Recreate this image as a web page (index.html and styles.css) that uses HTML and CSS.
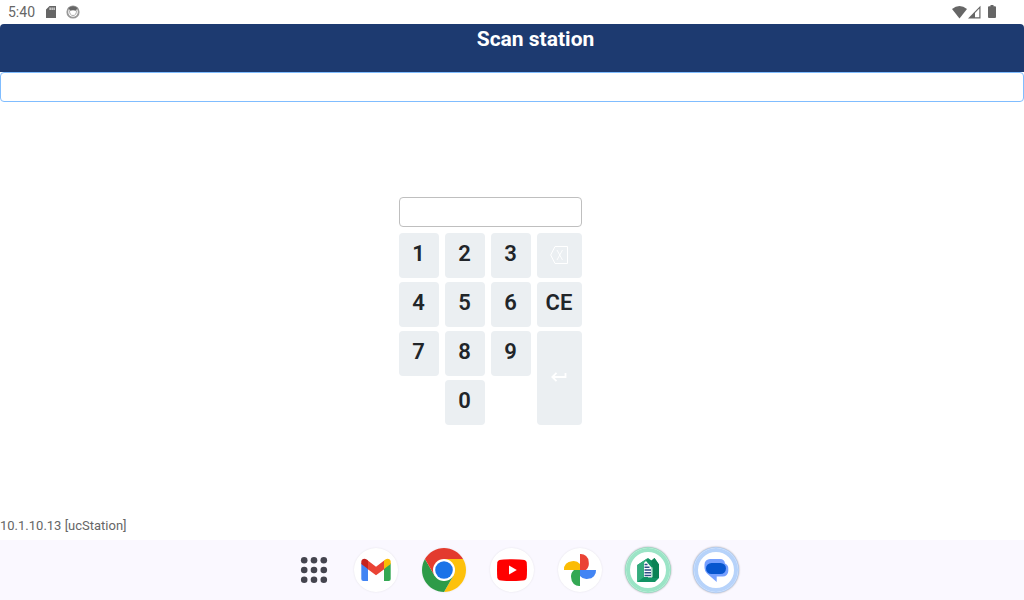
FILE: index.html
```
<!DOCTYPE html>
<html lang="en">
<head>
  <meta charset="UTF-8">
  <meta name="viewport" content="width=device-width, initial-scale=1.0">
  <title>Scan station</title>
  <link rel="stylesheet" href="styles.css">
</head>
<body>
  <div class="statusbar">
    <span class="clock">5:40</span>
    <svg class="sd" width="10" height="12" viewBox="0 0 10 12"><path fill="#666" fill-rule="evenodd" d="M3.500 0H10v12H0V3.500zM3.600 1.500v2.500h1V1.500zM5.600 1.500v2.500h1V1.500zM7.600 1.500v2.500h1V1.500z"/></svg>
    <svg class="face" width="14" height="14" viewBox="0 0 14 14">
      <circle cx="7" cy="7" r="5.700" fill="#fff" stroke="#999" stroke-width="1.800"/>
      <path d="M2.500 3Q7-.5 11.500 3L10 5.800Q7 4.500 4 5.800z" fill="#666"/>
      <path d="M3.500 5.500Q3.500 10.500 7 10.500T10.500 5.500" fill="none" stroke="#aaa"/>
    </svg>
    <div class="signals">
      <svg width="16" height="14" viewBox="0 0 16 14"><path d="M0 4Q7.500-2.200 15 4L7.500 13.500z" fill="#666"/></svg>
      <svg width="13" height="14" viewBox="0 0 13 14"><path d="M0 13.500L12.500.800V13.500z" fill="#666"/><path d="M7 8L11.300 3.600V12.300H7z" fill="#fff"/></svg>
      <svg class="battery" width="8" height="14" viewBox="0 0 8 14"><path d="M2.500 0h3v1.300H7a1 1 0 0 1 1 1V12a1 1 0 0 1-1 1H1a1 1 0 0 1-1-1V2.300a1 1 0 0 1 1-1h1.500z" fill="#666"/></svg>
    </div>
  </div>

  <header class="header">
    <h1>Scan station</h1>
  </header>
  <input type="text" class="textbox" id="scan" aria-label="Scan station">

  <main class="main">
    <form class="keypad">
      <input type="text" class="textbox display" id="code" aria-label="Code">
      <button type="button" class="key">1</button>
      <button type="button" class="key">2</button>
      <button type="button" class="key">3</button>
      <button type="button" class="key icon" aria-label="Backspace">
        <svg width="18" height="18" viewBox="0 0 18 18" fill="none" stroke="#fff"><path d="M5 .5h12.500v17H5L.7 9z"/><path d="M7 4l5.500 10M12.500 4L7 14" stroke-width=".9"/></svg>
      </button>
      <button type="button" class="key">4</button>
      <button type="button" class="key">5</button>
      <button type="button" class="key">6</button>
      <button type="button" class="key">CE</button>
      <button type="button" class="key">7</button>
      <button type="button" class="key">8</button>
      <button type="button" class="key">9</button>
      <button type="button" class="key icon enter" aria-label="Enter">
        <svg width="16" height="10" viewBox="0 0 16 10" fill="none" stroke="#fff" stroke-width="1.800"><path d="M14.500 1v4H1.500M5.500 .8L1.300 5l4.200 4.200"/></svg>
      </button>
      <button type="button" class="key zero">0</button>
    </form>
  </main>

  <footer class="info">10.1.10.13 [ucStation]</footer>

  <nav class="dock">
    <button type="button" class="apps" aria-label="All apps">
      <svg width="32" height="32" viewBox="0 0 32 32" fill="#44444f">
        <circle cx="6.200" cy="6.200" r="3.300"/><circle cx="16" cy="6.200" r="3.300"/><circle cx="25.800" cy="6.200" r="3.300"/>
        <circle cx="6.200" cy="16" r="3.300"/><circle cx="16" cy="16" r="3.300"/><circle cx="25.800" cy="16" r="3.300"/>
        <circle cx="6.200" cy="25.800" r="3.300"/><circle cx="16" cy="25.800" r="3.300"/><circle cx="25.800" cy="25.800" r="3.300"/>
      </svg>
    </button>
    <button type="button" class="app" aria-label="Gmail">
      <svg width="44" height="44" viewBox="0 0 44 44">
        <path d="M7.300 15L14 20v13H9.300a2 2 0 0 1-2-2z" fill="#4285f4"/>
        <path d="M30 20l6.700-5v16a2 2 0 0 1-2 2H30z" fill="#34a853"/>
        <path d="M13.500 12.300l8.500 6.400 8.500-6.400V21L22 27.200 13.500 21z" fill="#ea4335"/>
        <path d="M7.300 16v-2.200c0-3 3.300-3.900 5.400-2.300L14 12.600V21z" fill="#c5221f"/>
        <path d="M30 12.600l1.300-1.100c2.100-1.600 5.400-.7 5.400 2.300V16L30 21z" fill="#fbbc04"/>
      </svg>
    </button>
    <button type="button" class="app" aria-label="Chrome">
      <svg width="44" height="44" viewBox="0 0 44 44">
        <path d="M22 11h19.050A22 22 0 0 1 22 44l9.500-16.500z" fill="#fdc10c"/>
        <path d="M12.500 27.500L2.950 11A22 22 0 0 0 22 44l9.500-16.500L22 33z" fill="#2d9b48"/>
        <path d="M2.950 11A22 22 0 0 1 41.050 11H22L12.500 27.500z" fill="#e33b2e"/>
        <circle cx="22" cy="22" r="11" fill="#fff"/>
        <circle cx="22" cy="22" r="8.800" fill="#1a73e8"/>
      </svg>
    </button>
    <button type="button" class="app" aria-label="YouTube">
      <svg width="44" height="44" viewBox="0 0 44 44">
        <path d="M22 11.300q9 0 12.500.7 2 .5 2.200 2.500.6 7.500 0 15-.2 2-2.200 2.700-3.500.8-12.500.8t-12.500-.8q-2-.7-2.200-2.700-.6-7.500 0-15 .2-2 2.200-2.500 3.500-.7 12.500-.7z" fill="red"/>
        <path d="M19 17.500l7.800 4.500-7.800 4.500z" fill="#fff"/>
      </svg>
    </button>
    <button type="button" class="app" aria-label="Photos">
      <svg width="44" height="44" viewBox="0 0 44 44">
        <path d="M22 6a8 8 0 0 1 8.700 8A8.500 8.500 0 0 1 28 22h-6z" fill="#ea4335"/>
        <path d="M38 22a8 8 0 0 1-8 8.800A8.500 8.500 0 0 1 22 28v-6z" fill="#4285f4"/>
        <path d="M22 38a8 8 0 0 1-8.800-8A8.500 8.500 0 0 1 16 22h6z" fill="#34a853"/>
        <path d="M6 22a8 8 0 0 1 8-8.800A8.500 8.500 0 0 1 22 16v6z" fill="#fbbc04"/>
      </svg>
    </button>
    <button type="button" class="app ring green" aria-label="Station">
      <svg width="44" height="44" viewBox="0 0 44 44">
        <path d="M11.300 17L22 10l3.500 2.500L28.500 10l4.500 6.500V30L29 34H11.300z" fill="#119263"/>
        <path d="M11.300 17L21 10.500 18 17v12l-6.700 5z" fill="#33ac7d"/>
        <path d="M25 13l3.500-3 4.500 6.500V30h-6V20z" fill="#0c8255"/>
        <path d="M18 29V15l2-2 5.500 6.500V29z" fill="#fff"/>
        <path d="M18.500 16.500h3M18.500 19.200h5M18.500 22h6.500M18.500 24.800h6.500M18.500 27.600h6.500" stroke="#2f4c86" stroke-width="1.500"/>
        <path d="M26 19.500v9.500h-4" fill="none" stroke="#fff" stroke-width=".8"/>
      </svg>
    </button>
    <button type="button" class="app ring blue" aria-label="Messages">
      <svg width="44" height="44" viewBox="0 0 44 44">
        <path d="M16 11h10a5 5 0 0 1 5 4.500 5.500 5.500 0 0 1 3.300 5.500v2a5.500 5.500 0 0 1-5.500 5.500H22.700V34L13 25.500A8 8 0 0 1 10.500 20v-3.500A5.500 5.500 0 0 1 16 11z" fill="#76a0ff"/>
        <rect x="12" y="15" width="20" height="11" rx="5.500" fill="#0756cf"/>
      </svg>
    </button>
  </nav>
</body>
</html>
```

FILE: styles.css
```
* {
  box-sizing: border-box;
}
body {
  display: flex;
  flex-direction: column;
  min-height: 100vh;
  margin: 0;
  background: #fff;
  color: #212529;
  font-family: Roboto, "Liberation Sans", sans-serif;
}
button {
  padding: 0;
  border: none;
  font-family: inherit;
  cursor: pointer;
}
svg {
  display: block;
}

/* status bar */
.statusbar {
  display: flex;
  align-items: center;
  height: 24px;
  padding: 0 28px 0 8px;
  color: #666;
  font-size: 14px;
}
.sd {
  margin-left: 11px;
}
.face {
  margin-left: 10px;
}
.signals {
  display: flex;
  margin-left: auto;
  padding-bottom: 1px;
}
.battery {
  margin-left: 7px;
}

.header {
  height: 48px;
  padding-left: 47px;
  border-radius: 4px 4px 0 0;
  background: #1d3a70;
  color: #fff;
  text-align: center;
}
.header h1 {
  margin: 0;
  font-size: 21px;
  font-weight: bold;
  line-height: 30px;
}
.textbox {
  width: 100%;
  height: 30px;
  padding: 4px 8px;
  border: 1px solid #bfbfbf;
  border-radius: 4px;
  background: #fff;
  font-size: 16px;
  outline: none;
}
#scan,
.textbox:focus {
  border-color: #80bdff;
}

/* keypad */
.main {
  flex: 1;
  padding: 95px 43px 0 0;
}
.keypad {
  display: grid;
  grid-template-columns: repeat(3, 40px) 45px;
  gap: 4px 6px;
  justify-content: center;
}
.display {
  grid-column: 1 / -1;
  margin-bottom: 2px;
}
.key {
  height: 45px;
  padding: 0 1px 4px 0;
  border-radius: 4px;
  background: #ebeff2;
  color: #212529;
  font-size: 22px;
  font-weight: 600;
}
.key:active {
  background: #d5dce2;
}
.icon {
  display: flex;
  align-items: center;
  justify-content: center;
  padding: 0 2px 2px 0;
}
.enter {
  grid-column: 4;
  grid-row: 4 / span 2;
  height: auto;
}
.zero {
  grid-column: 2;
}

.info {
  padding-bottom: 4px;
  color: #666;
  font-size: 13px;
  line-height: 20px;
}

/* dock */
.dock {
  display: flex;
  align-items: center;
  justify-content: center;
  gap: 24px;
  height: 60px;
  padding-left: 12px;
  background: #faf8ff;
}
.apps {
  background: none;
}
.app {
  width: 44px;
  height: 44px;
  border-radius: 50%;
  background: #fff;
  box-shadow: 0 0 2px rgba(0, 0, 0, 0.1);
}
.ring {
  box-shadow: inset 0 0 0 4px #9be4c6, 0 0 0 1px #9be4c6, 0 0 2px 1px rgba(0, 0, 0, 0.4);
}
.blue {
  box-shadow: inset 0 0 0 4px #b7d3fa, 0 0 0 1px #b7d3fa, 0 0 2px 1px rgba(0, 0, 0, 0.4);
}
```
